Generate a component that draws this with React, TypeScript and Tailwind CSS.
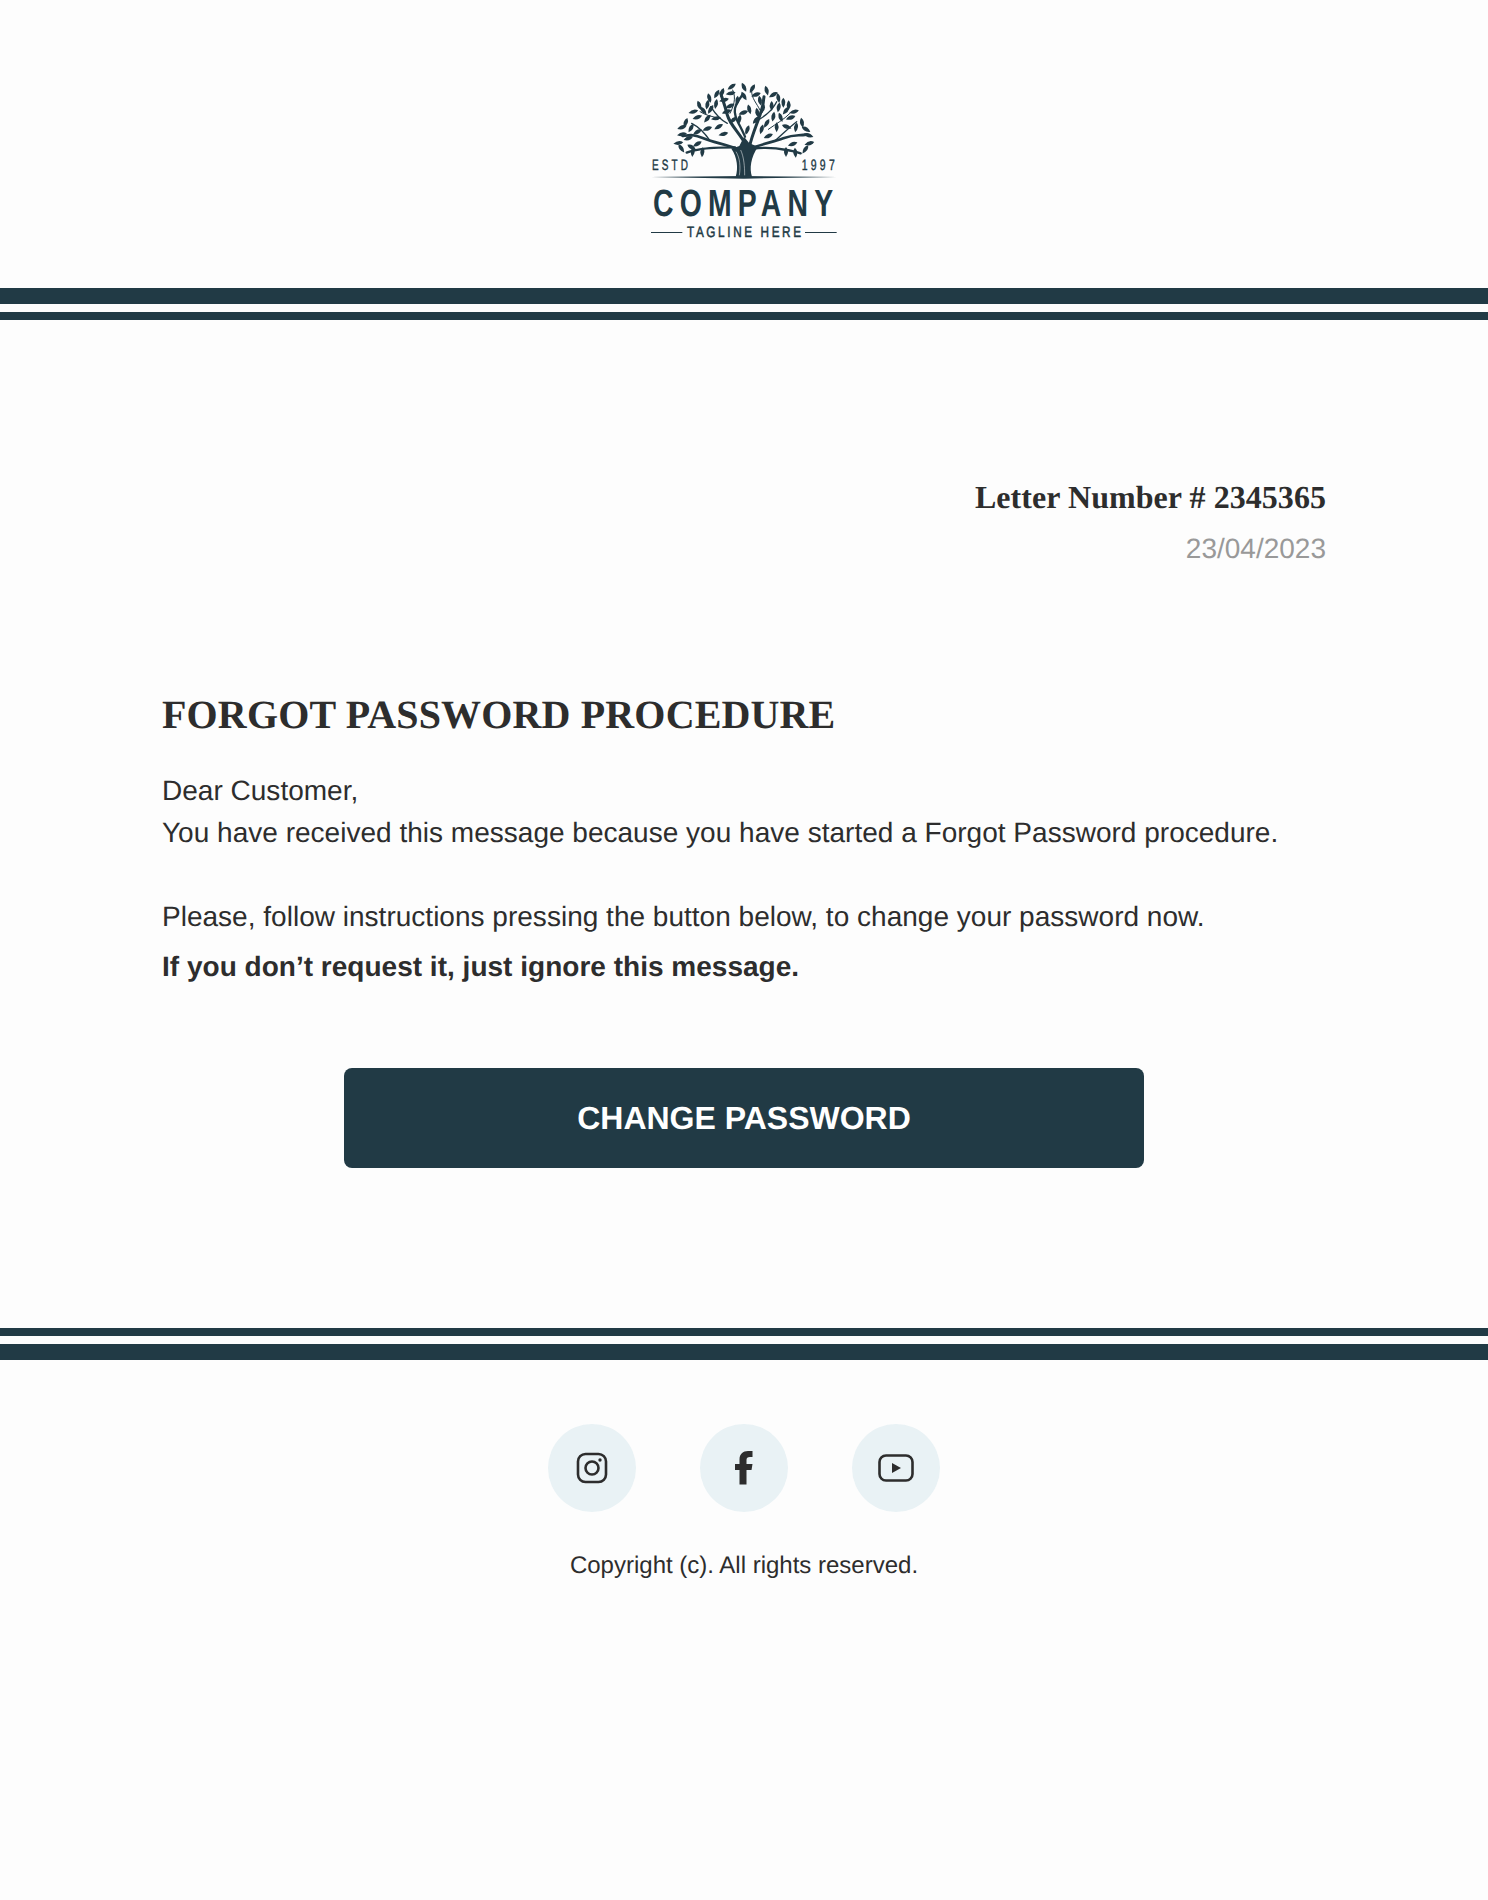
const leaves: [number, number, number][] = [
  [335, 50, 55], [372, 52, -25], [397, 56, 30], [408, 74, 70], [332, 70, 80], [306, 68, 20], [290, 72, 30], [268, 84, -15],
  [238, 106, -20], [262, 104, 10], [220, 125, 75], [250, 122, -40], [272, 118, 30], [288, 102, 10], [232, 142, 70], [262, 146, 40],
  [197, 158, 20], [213, 174, 30], [186, 172, 70], [186, 193, 80], [175, 219, 80], [184, 235, -35], [218, 246, 5], [247, 247, 5],
  [232, 186, 60], [262, 176, 70], [288, 145, 80], [296, 170, 60], [310, 192, 75], [340, 150, 50], [358, 148, 10], [352, 92, 5],
  [372, 78, -30], [388, 118, -15], [370, 128, 70], [382, 180, 20], [408, 150, 40], [428, 118, 20], [420, 92, -10], [440, 62, -15],
  [460, 74, 60], [475, 84, -10], [490, 98, 0], [506, 106, 0], [522, 125, 75], [498, 122, 40], [476, 112, 10], [455, 108, 0],
  [512, 143, 70], [482, 142, -20], [460, 140, 10], [440, 160, 30], [470, 172, 0], [500, 170, -70], [528, 172, 10], [546, 158, -10],
  [558, 178, -60], [566, 196, -70], [568, 220, 75], [556, 238, 35], [526, 248, -5], [498, 246, 0], [518, 222, 70], [232, 222, 60],
  [205, 205, 70], [215, 232, -60], [425, 178, 15], [445, 198, 65], [320, 125, 70], [412, 128, -10], [330, 108, 65], [312, 90, 75],
];

function Logo() {
  return (
    <svg width="240" height="180" viewBox="12 0 720 540" className="block">
      <g fill="none" stroke="#213a45" strokeLinecap="round">
        <path strokeWidth="8" d="M358 240C330 225 280 218 250 205S210 195 188 198" />
        <path strokeWidth="7" d="M345 232C310 232 270 232 240 238S215 242 200 248" />
        <path strokeWidth="9" d="M378 226C360 190 330 165 322 135S312 100 302 70" />
        <path strokeWidth="7" d="M375 200C358 160 340 140 345 115S360 90 368 72" />
        <path strokeWidth="9" d="M388 232C396 195 408 170 420 135S428 105 432 80" />
        <path strokeWidth="8" d="M388 238C420 222 455 218 490 205S530 198 560 194" />
        <path strokeWidth="7" d="M398 236C430 232 470 234 500 240S525 244 542 250" />
        <path strokeWidth="4" d="M322 160C300 150 285 130 272 110" />
        <path strokeWidth="4" d="M415 150C440 135 458 120 470 95" />
        <path strokeWidth="4" d="M270 212C255 190 235 170 215 160" />
        <path strokeWidth="4" d="M465 212C490 190 510 170 530 155" />
        <path strokeWidth="3" d="M330 130C340 110 350 85 338 60" />
        <path strokeWidth="3" d="M420 120C410 100 395 85 395 65" />
        <path strokeWidth="3" d="M300 145C275 140 255 135 240 125" />
        <path strokeWidth="3" d="M445 178C470 160 490 150 510 130" />
      </g>
      <path fill="#213a45" d="M347 320C355 295 352 262 334 236L358 228L372 200L388 220L414 230C392 262 388 295 396 320Z" />
      <path fill="none" stroke="#fdfdfd" strokeWidth="1.5" d="M358 316C362 290 360 265 348 245M374 316C374 290 372 262 362 240" />
      <g fill="#213a45">
        {leaves.map(([x, y, a], i) => (
          <path key={i} transform={`translate(${x} ${y}) rotate(${a})`} d="M0-15Q12-2 0 15Q-12-2 0-15Z" />
        ))}
      </g>
      <path fill="#213a45" d="M93 321L372 318L650 321L372 326Z" />
      <rect x="93" y="486" width="94" height="3" fill="#213a45" />
      <rect x="555" y="486" width="95" height="3" fill="#213a45" />
      <g fill="#213a45" stroke="#213a45" fontFamily="'Liberation Sans', sans-serif">
        <text x="96" y="300" fontSize="45" strokeWidth="1.2" letterSpacing="14" textLength="117" lengthAdjust="spacingAndGlyphs">ESTD</text>
        <text x="545" y="300" fontSize="45" strokeWidth="1.2" letterSpacing="14" textLength="109" lengthAdjust="spacingAndGlyphs">1997</text>
        <text x="99" y="437" fontSize="114" strokeWidth="0" fontWeight="700" letterSpacing="25" textLength="559" lengthAdjust="spacingAndGlyphs">COMPANY</text>
        <text x="201" y="500" fontSize="45" strokeWidth="1.6" letterSpacing="10" textLength="350" lengthAdjust="spacingAndGlyphs">TAGLINE HERE</text>
      </g>
    </svg>
  );
}

function Social({ children }: { children: React.ReactNode }) {
  return <a className="flex h-[88px] w-[88px] items-center justify-center rounded-full bg-[#e9f2f5]">{children}</a>;
}

export default function App() {
  return (
    <div className="min-h-[1900px] bg-[#fdfdfd] font-['Liberation_Sans',sans-serif] text-[#2d2d2d] [text-rendering:geometricPrecision]">
      <header className="flex h-[288px] justify-center pt-[70px]">
        <Logo />
      </header>
      <div className="h-4 bg-[#213a45]" />
      <div className="mt-2 h-2 bg-[#213a45]" />

      <main className="px-[162px] pt-[154px]">
        <div className="text-right">
          <h2 className="font-['Liberation_Serif',serif] text-[32px] leading-[46px] font-bold tracking-[0.05px]">Letter Number # 2345365</h2>
          <p className="mt-[5px] text-[28px] leading-[48px] text-[#999999]">23/04/2023</p>
        </div>
        <h1 className="mt-[114px] font-['Liberation_Serif',serif] text-[40px] leading-[56px] font-bold tracking-[0.15px]">FORGOT PASSWORD PROCEDURE</h1>
        <div className="mt-[27px] text-[28px] leading-[42px] tracking-[0.015px]">
          <p>Dear Customer,</p>
          <p>You have received this message because you have started a Forgot Password procedure.</p>
          <p className="mt-[42px]">Please, follow instructions pressing the button below, to change your password now.</p>
          <p className="mt-2 font-bold">If you don’t request it, just ignore this message.</p>
        </div>
        <div className="mt-[80px] flex justify-center">
          <a className="flex h-[100px] w-[800px] items-center justify-center rounded-lg bg-[#213a45] text-[32px] font-bold text-white">
            CHANGE PASSWORD
          </a>
        </div>
      </main>

      <div className="mt-[160px] h-2 bg-[#213a45]" />
      <div className="mt-2 h-4 bg-[#213a45]" />

      <footer className="flex flex-col items-center pt-16">
        <div className="flex gap-16">
          <Social>
            <svg width="32" height="32" viewBox="0 0 32 32" fill="none" stroke="#2d2d2d" strokeWidth="2.6">
              <rect x="2" y="2" width="28" height="28" rx="7.5" />
              <circle cx="16" cy="16" r="6.5" />
              <circle cx="24" cy="8" r="1.7" fill="#2d2d2d" stroke="none" />
            </svg>
          </Social>
          <Social>
            <svg width="18" height="34" viewBox="0 0 18 34" fill="#2d2d2d">
              <path d="M4.5 33.5V19H0V13H4.5V8.5C4.5 3 8 0 13 0H17.5V6H15C12.5 6 11.5 7 11.5 9V13H17.5L16.5 19H11.5V33.5Z" />
            </svg>
          </Social>
          <Social>
            <svg width="36" height="28" viewBox="0 0 36 28" fill="none" stroke="#2d2d2d" strokeWidth="2.6">
              <rect x="1.5" y="1.5" width="33" height="25" rx="6.5" />
              <path d="M14 9V19L23 14Z" fill="#2d2d2d" stroke="none" />
            </svg>
          </Social>
        </div>
        <p className="mt-[36px] text-2xl leading-9">Copyright (c). All rights reserved.</p>
      </footer>
    </div>
  );
}
